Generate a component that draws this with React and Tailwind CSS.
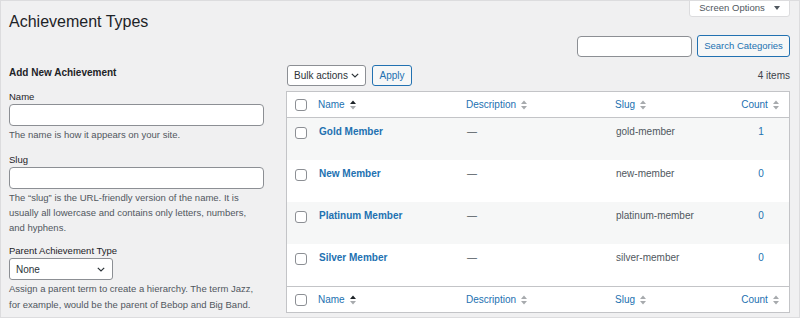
import React from "react";

const terms = [
  { name: "Gold Member", slug: "gold-member", count: 1 },
  { name: "New Member", slug: "new-member", count: 0 },
  { name: "Platinum Member", slug: "platinum-member", count: 0 },
  { name: "Silver Member", slug: "silver-member", count: 0 },
];

// up / down sorting arrows next to column titles
const SortIcon = ({ active }) => (
  <svg width="6" height="10" viewBox="0 0 6 10" className="ml-[5px] shrink-0">
    <polygon points="3,0.5 6,4 0,4" fill={active ? "#1d2327" : "#a7aaad"} />
    <polygon points="0,6 6,6 3,9.5" fill="#a7aaad" />
  </svg>
);

const Chevron = () => (
  <svg width="8" height="5" viewBox="0 0 8 5" className="shrink-0">
    <polyline points="0.8,0.8 4,4 7.2,0.8" fill="none" stroke="#2c3338" strokeWidth="1.2" />
  </svg>
);

const Checkbox = () => (
  <span className="block w-[12px] h-[12px] rounded-[3px] border border-[#8c8f94] bg-white" />
);

const HeadRow = ({ footer }) => (
  <div
    className={`grid grid-cols-[23px_148px_149px_126px_1fr] h-[26px] items-center bg-white text-[#2271b1] ${
      footer ? "border-t border-[#c3c4c7] h-[25px]" : "border-b border-[#c3c4c7]"
    }`}
  >
    <div className="pl-2">
      <Checkbox />
    </div>
    <div className="pl-2 flex items-center">
      Name
      <SortIcon active />
    </div>
    <div className="pl-2 flex items-center">
      Description
      <SortIcon />
    </div>
    <div className="pl-2 flex items-center">
      Slug
      <SortIcon />
    </div>
    <div className="flex items-center justify-center pr-[2px]">
      Count
      <SortIcon />
    </div>
  </div>
);

const Field = ({ label, children, help, className }) => (
  <div className={className}>
    <label className="block text-[9.5px] leading-[15px] text-[#1d2327]">{label}</label>
    {children}
    {help}
  </div>
);

export default function App() {
  return (
    <div className="w-[800px] h-[318px] overflow-hidden border border-[#dcdcde] bg-[#f0f0f1] font-['Liberation_Sans',Arial,sans-serif] text-[#1d2327]">
      <div className="flex justify-between items-start pl-2 pr-[9px]">
        <h1 className="mt-[12px] text-[16px] leading-[17px] font-normal text-[#1d2327]">
          Achievement Types
        </h1>
        <button className="-mt-[2px] h-[18px] w-[101px] flex items-center justify-center gap-[9px] bg-white border border-[#dcdcde] rounded-b-[3px] text-[9.5px] text-[#50575e]">
          Screen Options
          <svg width="6" height="4" viewBox="0 0 6 4">
            <polygon points="0,0 6,0 3,4" fill="#50575e" />
          </svg>
        </button>
      </div>

      <div className="flex justify-end items-center gap-[5px] pr-[9px] mt-[5px] h-[22px]">
        <input className="w-[115px] h-[21px] bg-white border border-[#8c8f94] rounded-[4px] outline-none" />
        <button className="w-[93px] h-[22px] bg-[#f6f7f7] border border-[#2271b1] rounded-[3px] text-[9.5px] text-[#2271b1]">
          Search Categories
        </button>
      </div>

      <div className="flex gap-[22px] pl-2 pr-[9px] mt-[8px]">
        {/* add new term form */}
        <div className="w-[255px] shrink-0">
          <h2 className="mt-px text-[10px] leading-[13px] font-bold text-[#1d2327]">
            Add New Achievement
          </h2>

          <Field
            className="mt-[10px]"
            label="Name"
            help={
              <p className="mt-px text-[9.5px] leading-[15px] text-[#50575e]">
                The name is how it appears on your site.
              </p>
            }
          >
            <input className="block w-full h-[22px] bg-white border border-[#8c8f94] rounded-[4px] outline-none" />
          </Field>

          <Field
            className="mt-[10px]"
            label="Slug"
            help={
              <p className="mt-px text-[9.5px] leading-[15px] text-[#50575e] pr-[6px]">
                The “slug” is the URL-friendly version of the name. It is usually all lowercase and
                contains only letters, numbers, and hyphens.
              </p>
            }
          >
            <input className="block w-full h-[22px] bg-white border border-[#8c8f94] rounded-[4px] outline-none" />
          </Field>

          <Field
            className="mt-[8px]"
            label="Parent Achievement Type"
            help={
              <p className="mt-px text-[9.5px] leading-[16px] text-[#50575e]">
                Assign a parent term to create a hierarchy. The term Jazz, for example, would be the
                parent of Bebop and Big Band.
              </p>
            }
          >
            <div className="w-[104px] h-[22px] flex items-center justify-between pl-[6px] pr-[7px] bg-white border border-[#8c8f94] rounded-[3px] text-[10px] text-[#2c3338]">
              None
              <Chevron />
            </div>
          </Field>
        </div>

        {/* terms list */}
        <div className="flex-1 text-[10px]">
          <div className="flex items-center justify-between h-[21px]">
            <div className="flex items-center gap-[6px] ml-px">
              <div className="w-[79px] h-[21px] flex items-center justify-between pl-[6px] pr-[6px] bg-white border border-[#8c8f94] rounded-[3px] text-[#2c3338]">
                Bulk actions
                <Chevron />
              </div>
              <button className="w-[40px] h-[21px] bg-[#f6f7f7] border border-[#2271b1] rounded-[3px] text-[#2271b1]">
                Apply
              </button>
            </div>
            <span className="text-[#3c434a]">4 items</span>
          </div>

          <div className="mt-[5px] border border-[#c3c4c7] bg-white">
            <HeadRow />
            {terms.map((t, i) => (
              <div
                key={t.slug}
                className={`grid grid-cols-[23px_148px_149px_126px_1fr] h-[42px] items-start ${
                  i % 2 === 0 ? "bg-[#f6f7f7]" : "bg-white"
                }`}
              >
                <div className="pl-2 pt-[9px]">
                  <Checkbox />
                </div>
                <div className="pl-[9px] pt-[6px] leading-[15px] font-bold text-[#2271b1]">{t.name}</div>
                <div className="pl-[9px] pt-[6px] leading-[15px] text-[#50575e]">—</div>
                <div className="pl-[9px] pt-[6px] leading-[15px] text-[#50575e]">{t.slug}</div>
                <div className="pt-[6px] leading-[15px] text-center text-[#2271b1]">{t.count}</div>
              </div>
            ))}
            <HeadRow footer />
          </div>
        </div>
      </div>
    </div>
  );
}
